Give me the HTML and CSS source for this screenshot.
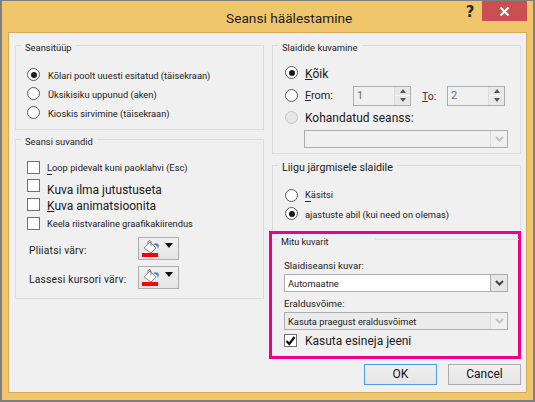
FILE: index.html
```html
<!DOCTYPE html>
<html lang="et">
<head>
<meta charset="utf-8">
<title>Seansi häälestamine</title>
<link rel="stylesheet" href="styles.css">
</head>
<body>
<div class="window">
  <header class="titlebar">
    <div class="title">Seansi häälestamine</div>
    <div class="help">?</div>
    <div class="close"><svg width="11" height="9" viewBox="0 0 11 9"><path d="M1.500 .5L9.500 8.500M9.500 .5L1.500 8.500" stroke="#fff" stroke-width="2" fill="none"/></svg></div>
  </header>
  <main class="content">
    <div class="columns">
      <div class="col">
        <fieldset class="group g-type">
          <legend>Seansitüüp</legend>
          <div class="row r-type1"><span class="radio on"></span><span class="lbl">Kõlari poolt uuesti esitatud (täisekraan)</span></div>
          <div class="row r-type"><span class="radio"></span><span class="lbl">Üksikisiku uppunud (aken)</span></div>
          <div class="row r-type"><span class="radio"></span><span class="lbl">Kioskis sirvimine (täisekraan)</span></div>
        </fieldset>
        <fieldset class="group g-opts">
          <legend>Seansi suvandid</legend>
          <div class="row r-c1"><span class="check"></span><span class="lbl"><u class="low">L</u>oop pidevalt kuni paoklahvi (Esc)</span></div>
          <div class="row r-c2"><span class="check"></span><span class="lbl big">Kuva ilma jutustuseta</span></div>
          <div class="row r-c3"><span class="check"></span><span class="lbl big"><u>K</u>uva animatsioonita</span></div>
          <div class="row r-c4"><span class="check"></span><span class="lbl">Keela riistvaraline graafikakiirendus</span></div>
          <div class="row color-row cr1"><span class="color-lbl">Pliiatsi värv:</span>
            <span class="color-btn"><svg width="18" height="19" viewBox="0 0 18 19"><path d="M2 9L8 3l6 6-5 5z" fill="#fff" stroke="#8a8a8a"/><path d="M6 5V2.500Q7.500 .5 9 2.500V7" fill="none" stroke="#7a7a7a"/><path d="M11 5Q15 3 17 6l-1 4-1-3z" fill="#4f81bd"/><rect x="0" y="14" width="16" height="4" fill="#f00"/></svg><span class="caret"></span></span></div>
          <div class="row color-row cr2"><span class="color-lbl">Lassesi kursori värv:</span>
            <span class="color-btn"><svg width="18" height="19" viewBox="0 0 18 19"><path d="M2 9L8 3l6 6-5 5z" fill="#fff" stroke="#8a8a8a"/><path d="M6 5V2.500Q7.500 .5 9 2.500V7" fill="none" stroke="#7a7a7a"/><path d="M11 5Q15 3 17 6l-1 4-1-3z" fill="#4f81bd"/><rect x="0" y="14" width="16" height="4" fill="#f00"/></svg><span class="caret"></span></span></div>
        </fieldset>
      </div>
      <div class="col">
        <fieldset class="group g-slides">
          <legend>Slaidide kuvamine</legend>
          <div class="row r-s1"><span class="radio on"></span><span class="lbl big"><u>K</u>õik</span></div>
          <div class="row r-s2"><span class="radio"></span><span class="lbl mid"><u>F</u>rom:</span>
            <span class="spin s-from"><span class="val">1</span><span class="arrows"><i class="up"></i><i class="down"></i></span></span>
            <span class="to"><u>T</u>o:</span>
            <span class="spin"><span class="val">2</span><span class="arrows"><i class="up"></i><i class="down"></i></span></span>
          </div>
          <div class="row r-s3"><span class="radio off"></span><span class="lbl big">Kohandatud seanss:</span></div>
          <div class="combo c-custom"><span class="val"></span><span class="drop dis"><svg width="9" height="6" viewBox="0 0 9 6"><path d="M1 1l3.500 3.500L8 1" fill="none" stroke="#c4c4c4" stroke-width="2"/></svg></span></div>
        </fieldset>
        <fieldset class="group g-next">
          <legend class="leg-big">Liigu järgmisele slaidile</legend>
          <div class="row r-n1"><span class="radio"></span><span class="lbl"><u class="low">K</u>äsitsi</span></div>
          <div class="row r-n2"><span class="radio on"></span><span class="lbl">ajastuste abil (kui need on olemas)</span></div>
        </fieldset>
        <section class="highlight">
          <fieldset class="group g-multi">
            <legend>Mitu kuvarit</legend>
            <div class="field-lbl f1">Slaidiseansi kuvar:</div>
            <div class="combo c-screen active"><span class="val">Automaatne</span><span class="drop"><svg width="9" height="6" viewBox="0 0 9 6"><path d="M1 1l3.500 3.500L8 1" fill="none" stroke="#444" stroke-width="2"/></svg></span></div>
            <div class="field-lbl f2">Eraldusvõime:</div>
            <div class="combo c-res"><span class="val">Kasuta praegust eraldusvõimet</span><span class="drop dis"><svg width="9" height="6" viewBox="0 0 9 6"><path d="M1 1l3.500 3.500L8 1" fill="none" stroke="#c4c4c4" stroke-width="2"/></svg></span></div>
            <div class="row r-presenter"><span class="check checked"><svg width="11" height="10" viewBox="0 0 11 10"><path d="M1.500 5l2.800 3L9.500 1" fill="none" stroke="#111" stroke-width="2.200"/></svg></span><span class="lbl big">Kasuta esine<u>j</u>a jeeni</span></div>
          </fieldset>
        </section>
      </div>
    </div>
    <footer class="buttons">
      <button class="btn primary">OK</button>
      <button class="btn">Cancel</button>
    </footer>
  </main>
</div>
</body>
</html>
```
FILE: styles.css
```css
* { box-sizing: border-box; }
html, body { margin: 0; padding: 0; background: #fff; }
body { width: 535px; height: 402px; overflow: hidden; font-family: Roboto, "Open Sans", sans-serif; font-size: 9.300px; color: #222; }
.window { width: 535px; height: 402px; display: flex; flex-direction: column; background: #efc66c; border: solid #7f7f7f; border-width: 1.5px 2px 2px 2px; padding: 0 6px 7px 6px; }
.titlebar { height: 30.5px; flex: none; display: flex; align-items: flex-start; }
.title { font-size: 13.700px; color: #1c1c1c; margin: 7px 0 0 218px; width: 120px; white-space: nowrap; line-height: 20px; }
.help { font: bold 15px/18px "DejaVu Sans", sans-serif; margin: 2px 0 0 117px; width: 14px; text-align: center; color: #2b2b2b; }
.close { width: 45px; height: 20px; margin-left: 5px; background: #c75050; display: flex; align-items: center; justify-content: center; }
.content { flex: 1; background: #f0f0f0; border: 1px solid #d3aa55; padding: 3px 5px 0 6px; display: flex; flex-direction: column; position: relative; }
.columns { display: grid; grid-template-columns: 249px 249px; column-gap: 8px; }
.col { display: flex; flex-direction: column; min-width: 0; }
.group { margin: 0; border: 1px solid #dcdcdc; padding: 0; min-width: 0; display: block; }
legend { padding: 5px 4px 0 4px; margin-left: 5px; line-height: 14px; font-size: 9.400px; color: #222; }
.leg-big { font-size: 10.700px; }
.g-type { height: 94px; }
.g-opts { height: 169px; }
.g-slides { height: 118px; }
.g-next { height: 75px; margin-top: 2px; border-bottom: 0; }
.highlight { border: 3px solid #ec008c; width: 252px; height: 128px; margin-left: -3px; position: relative; }
.g-multi { height: 125px; margin: -4px -1px 0 0; border: 0; border-top: 1px solid #dcdcdc; padding-top: 0; }
.g-multi legend { margin-left: 5px; padding-right: 46px; font-size: 9.100px; }
.row { display: flex; align-items: center; }
.radio { width: 13px; height: 13px; flex: none; border-radius: 50%; border: 1px solid #5a5a5a; background: #fff; display: inline-block; position: relative; }
.radio.on::after { content: ""; position: absolute; inset: 2.500px; border-radius: 50%; background: #1a1a1a; }
.radio.off { background: #e6e6e6; border-color: #c6c6c6; }
.check { width: 13px; height: 13px; flex: none; border: 1px solid #707070; background: #fff; display: flex; align-items: center; justify-content: center; }
.lbl { white-space: nowrap; line-height: 14px; }
.big { font-size: 12px; color: #1a1a1a; }
.mid { font-size: 10.900px; }
u.low { text-underline-offset: 3px; }
.r-type1 { margin: 13px 0 0 11px; height: 14px; }
.r-type { margin: 5px 0 0 11px; height: 14px; }
.r-type .lbl, .r-type1 .lbl { margin: 3px 0 0 8px; }
.r-c1 { margin: 12px 0 0 11px; height: 14px; }
.r-c1 .lbl { margin-left: 7px; }
.r-c2 { margin: 4px 0 0 11px; height: 14px; }
.r-c2 .lbl { margin: 9px 0 0 7px; }
.r-c3 { margin: 5px 0 0 11px; height: 14px; }
.r-c3 .lbl { margin: 3px 0 0 7px; }
.r-c4 { margin: 5px 0 0 11px; height: 14px; }
.r-c4 .lbl { margin-left: 7px; }
.color-row { height: 23px; margin-left: 13px; }
.cr1 { margin-top: 6px; }
.cr2 { margin-top: 6px; }
.color-lbl { width: 109px; flex: none; margin-top: 5px; font-size: 10.300px; letter-spacing: .2px; }
.color-btn { width: 41px; height: 23px; border: 1px solid #adadad; background: linear-gradient(#f0f0f0, #e5e5e5); display: flex; align-items: center; padding-left: 3px; }
.caret { width: 0; height: 0; border: solid transparent; border-width: 5px 4px 0 4px; border-top-color: #111; margin: -5px 0 0 5px; }
.r-s1 { margin: 11px 0 0 12px; height: 14px; }
.r-s1 .lbl { margin: 2px 0 0 7px; }
.r-s2 { margin: 6px 0 0 12px; height: 20px; }
.r-s2 .lbl { margin-left: 7px; width: 48px; }
.r-s3 { margin: 5px 0 0 12px; height: 14px; }
.r-s3 .lbl { margin-left: 7px; }
.spin { width: 58px; height: 20px; border: 1px solid #adadad; display: flex; justify-content: space-between; color: #6d6d6d; font-size: 11px; }
.spin .val { padding: 2px 0 0 3px; }
.arrows { width: 16px; border-left: 1px solid #dcdcdc; display: flex; flex-direction: column; }
.arrows i { flex: 1; display: flex; align-items: center; justify-content: center; background: #e8e8e8; }
.arrows i::after { content: ""; width: 0; height: 0; border: solid transparent; border-width: 0 3.500px; }
.arrows .up { border-bottom: 1px solid #f6f6f6; }
.arrows .up::after { border-bottom: 4px solid #555; }
.arrows .down::after { border-top: 4px solid #555; }
.to { width: 36px; padding: 1px 0 0 11px; font-size: 10.500px; color: #333; }
.combo { height: 18px; display: flex; justify-content: space-between; border: 1px solid #adadad; color: #222; }
.combo .val { padding: 2px 0 0 3px; line-height: 14px; white-space: nowrap; }
.drop { width: 17px; display: flex; align-items: center; justify-content: center; background: #e6e6e6; border-left: 1px solid #adadad; }
.drop.dis { background: #f0f0f0; border-left-color: #dcdcdc; }
.c-custom { margin: 5px 0 0 31px; width: 204px; }
.active { background: #fff; }
.r-n1 { margin: 14px 0 0 12px; height: 14px; }
.r-n1 .lbl { margin: -2px 0 0 7px; }
.r-n2 { margin: 4px 0 0 12px; height: 14px; }
.r-n2 .lbl { margin: 2px 0 0 7px; }
.field-lbl { margin-left: 12px; line-height: 14px; color: #222; font-size: 9.700px; }
.f1 { margin-top: 10px; }
.f2 { margin-top: 5px; }
.c-screen, .c-res { margin: 1px 0 0 12px; width: 224px; }
.c-screen .val, .c-res .val { padding-left: 3px; }
.c-res { background: #ebebeb; }
.r-presenter { margin: 4px 0 0 12px; height: 14px; }
.r-presenter .lbl { margin-left: 8px; }
.buttons { display: flex; justify-content: flex-end; gap: 11px; margin: 5px 0 0 0; }
.btn { width: 73px; height: 21px; padding: 0; border: 1px solid #acacac; background: linear-gradient(#f0f0f0, #e5e5e5); font: 12px Roboto, "Open Sans", sans-serif; color: #111; }
.primary { border-color: #4a9be8; }
```
